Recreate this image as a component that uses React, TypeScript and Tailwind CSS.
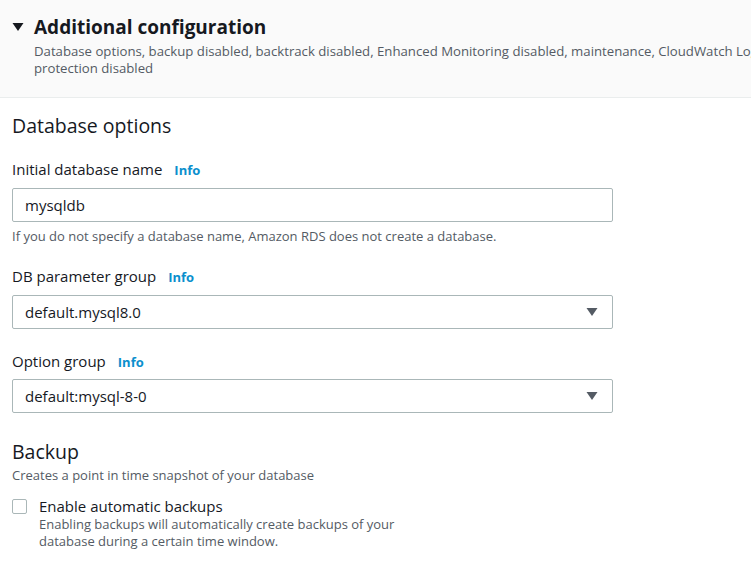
import React from 'react';

const font = { fontFamily: '"Open Sans", "Noto Sans", Arial, sans-serif' };

const Info = () => <span className="ml-[12px] text-[13px] font-bold text-[#0b8fcd]">Info</span>;

const Label: React.FC<{ text: string; className?: string }> = ({ text, className }) => (
    <div className={`flex items-baseline text-[15px] leading-[20px] text-[#16191f] ${className ?? ''}`}>
        {text}
        <Info />
    </div>
);

const Caret = () => (
    <svg width="12" height="10" viewBox="0 0 12 10" className="text-[#545b64]">
        <path d="M0.5 1h11L6 9z" fill="currentColor" />
    </svg>
);

const SelectBox: React.FC<{ value: string; className?: string }> = ({ value, className }) => (
    <div className={`w-[601px] h-[34px] border border-[#aab7b8] rounded-[2px] bg-white flex items-center justify-between pl-[12px] pr-[14px] text-[15px] text-[#16191f] ${className ?? ''}`}>
        <span>{value}</span>
        <Caret />
    </div>
);

export default function App() {
    return (
        <div className="w-[751px] h-[580px] overflow-hidden bg-white" style={font}>
            <div className="w-[1100px] bg-[#fafafa] border-b border-[#eaeded] pl-[12px] pt-[15px] pb-[20px]">
                <div className="flex items-center">
                    <svg width="12" height="10" viewBox="0 0 12 10" className="mr-[10px] text-[#16191f]">
                        <path d="M0.5 1h11L6 9z" fill="currentColor" />
                    </svg>
                    <h2 className="text-[19px] leading-[24px] font-bold text-[#16191f]">Additional configuration</h2>
                </div>
                <div className="pl-[22px] mt-[4px] text-[13.2px] leading-[17px] text-[#545b64]">
                    <div className="whitespace-nowrap">Database options, backup disabled, backtrack disabled, Enhanced Monitoring disabled, maintenance, CloudWatch Logs exports disabled, Deletion</div>
                    <div>protection disabled</div>
                </div>
            </div>

            <div className="px-[12px] pt-[17px]">
                <h3 className="text-[19.5px] leading-[22px] text-[#16191f]">Database options</h3>

                <Label text="Initial database name" className="mt-[22px]" />
                <div className="mt-[8px] w-[601px] h-[34px] border border-[#aab7b8] rounded-[2px] bg-white flex items-center pl-[12px] text-[15px] text-[#16191f]">
                    mysqldb
                </div>
                <p className="mt-[6px] text-[13px] leading-[16px] text-[#545b64]">If you do not specify a database name, Amazon RDS does not create a database.</p>

                <Label text="DB parameter group" className="mt-[22px]" />
                <SelectBox value="default.mysql8.0" className="mt-[8px]" />

                <Label text="Option group" className="mt-[22px]" />
                <SelectBox value="default:mysql-8-0" className="mt-[7px]" />

                <h3 className="mt-[28px] text-[19.5px] leading-[22px] text-[#16191f]">Backup</h3>
                <p className="mt-[4px] text-[13px] leading-[16px] text-[#545b64]">Creates a point in time snapshot of your database</p>

                <div className="mt-[13px] flex items-start">
                    <div className="mt-[3px] w-[15px] h-[15px] border border-[#aab7b8] rounded-[2px] bg-white shrink-0" />
                    <div className="ml-[12px]">
                        <div className="text-[15px] leading-[20px] text-[#16191f]">Enable automatic backups</div>
                        <div className="text-[13px] leading-[17px] text-[#545b64]">
                            <div>Enabling backups will automatically create backups of your</div>
                            <div>database during a certain time window.</div>
                        </div>
                    </div>
                </div>
            </div>
        </div>
    );
}
